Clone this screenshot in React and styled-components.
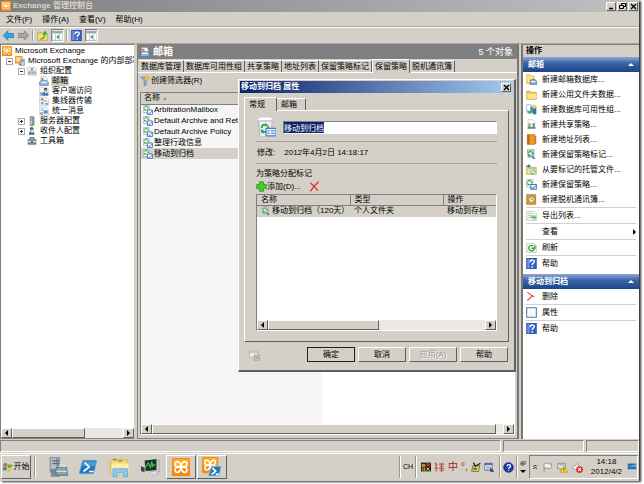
import React, { useEffect, useRef } from 'react'
import styled, { createGlobalStyle, css } from 'styled-components'

const Svg = ({ size = 11, children }) => (
  <svg width={size} height={size} viewBox="0 0 16 16" aria-hidden="true" style={{ flex: 'none', display: 'block' }}>
    {children}
  </svg>
)

const Knot = ({ s = 16 }) => (
  <g transform={`scale(${s / 16})`}>
    <rect width="16" height="16" rx="1" fill="#f58a0b" />
    <rect x="1" y="1" width="14" height="7" fill="#ffae2b" />
    <path d="M8 8C4 9 2 7 3 4C5 2 8 4 8 8C8 4 11 2 13 4C14 7 12 9 8 8C12 7 14 9 13 12C11 14 8 12 8 8C8 12 5 14 3 12C2 9 4 7 8 8Z" fill="none" stroke="#fff" strokeWidth="1.500" />
  </g>
)

const Recycle = ({ x = 0, y = 0, s = 1 }) => (
  <g transform={`translate(${x} ${y}) scale(${s})`} fill="none" stroke="#299b35" strokeWidth="2.200">
    <path d="M2 6L4 2h4M10 3l2 4-3 1M8 11H3L2 8" />
    <path d="M7 0l3 2-3 2M5 9l-3 2 3 2" strokeWidth="1.200" />
  </g>
)

const Person = ({ x = 0, y = 0 }) => (
  <g transform={`translate(${x} ${y})`}>
    <path d="M0 12c0-8 9-8 9 0z" fill="#2c69ad" />
    <path d="M3 6l2 4 2-4z" fill="#fff" />
    <circle cx="4.500" cy="3.500" r="3" fill="#d59b68" />
    <path d="M1.500 3C2-1 7-1 7.500 3L5 2z" fill="#3c3028" />
  </g>
)

const Page = ({ children }) => (
  <>
    <path d="M1 2h11l3 3v10H1z" fill="#f7f8f9" stroke="#b4b9bd" />
    {children}
  </>
)

const FolderShape = () => (
  <>
    <path d="M1 3h5l2 2h7v10H1z" fill="#f4c74f" stroke="#c89d35" />
    <path d="M2 7h13v7H2z" fill="#ffe68b" />
  </>
)

const shapes = {
  exchange: <Knot />,
  org: <><Knot s={12} /><path d="M9 5h6v10H9z" fill="#ced9e4" stroke="#6e8094" /><path d="M10 7h4M10 9h4" stroke="#3977b5" /><path d="M6 12h4v3H6z" fill="#57a744" /></>,
  orgcfg: <Page><path d="M8 4v4M4 11V8h8v3" fill="none" stroke="#777" /><path d="M6 3h4v3H6zM2 10h4v3H2zM7 10h3v3H7zM11 10h3v3h-3z" fill="#8c979f" /></Page>,
  mailbox: <><path d="M3 1h8l2 3v7H3z" fill="#fff" stroke="#a7b0ba" /><path d="M4 3h3v3H4z" fill="#cf4d3a" /><path d="M1 9l3-2h8l3 3v5H1z" fill="#91b8dc" stroke="#466f9c" /><path d="M4 9h8l1 2H4z" fill="#eff6fc" /></>,
  client: <Page><path d="M2 10h7v5H2z" fill="#74a5d4" /><Person x={6} y={3} /></Page>,
  hub: <Page><path d="M3 4h4v3H3z" fill="#d75844" /><path d="M6 8h6M9 6l3 2-3 3" fill="none" stroke="#8e99a5" /><path d="M3 10h4v3H3zM10 11h4v3h-4z" fill="#699bc8" /></Page>,
  um: <Page><path d="M3 5h5M3 7h5" stroke="#939da5" /><path d="M8 7h6v5H8z" fill="#4e8dce" /><path d="M2 10h5v4H2z" fill="#97a6b4" /></Page>,
  server: <><path d="M5 0l7 1v14l-7 1z" fill="#8797a6" /><path d="M5 0l4 1v14l-4 1z" fill="#d1dbe2" stroke="#667888" /><path d="M6 3h2M6 5h2M6 7h2" stroke="#496478" /><circle cx="9" cy="13" r="2" fill="#50b83f" /></>,
  person: <Person x={3} y={2} />,
  toolbox: <><path d="M5 5V3h6v2" fill="none" stroke="#53616c" strokeWidth="2" /><path d="M1 5h14v9H1z" fill="#778d9b" /><path d="M1 9h14" stroke="#d7e2e6" strokeWidth="2" /><path d="M7 8h2v3H7z" fill="#40515c" /></>,
  back: <path d="M0 8l7-7v4h9v6H7v4z" fill="#30a3e2" stroke="#187bb5" />,
  next: <path d="M16 8L9 1v4H0v6h9v4z" fill="#a5a7a6" stroke="#777" />,
  up: <><path d="M1 4h5l2 2h7v9H1z" fill="#f7db6b" stroke="#bda047" /><path d="M5 12c4 0 5-3 5-6H7l5-5 3 5h-3c0 5-3 8-7 8z" fill="#40ad3b" /></>,
  pane: <><path d="M0 2h16v13H0z" fill="#fff" stroke="#8a979f" /><path d="M1 2h14v3H1z" fill="#8fa8b9" /><path d="M5 5v10M11 5v10" stroke="#aab6bf" /><path d="M6 10l4-3v6z" fill="#35a644" /></>,
  help: <><path d="M1 0h14v16H1z" fill="#3565ce" stroke="#153791" /><path d="M2 1h3v14H2z" fill="#7296e2" /><path d="M6 6c0-4 6-4 6-1 0 3-3 2-3 5M9 12v2" fill="none" stroke="#fff" strokeWidth="2" /></>,
  filter: <><path d="M1 3h12L9 8v6l-3 2V8z" fill="#93b8d4" stroke="#577d9a" /><path d="M11 0l1 3 4 1-3 2v4l-2-3-4 1 2-3-1-3z" fill="#ffba2d" /></>,
  policy: <><path d="M1 1h9v11H1z" fill="#fff" stroke="#90a0ad" /><Recycle x={1} y={1} s={0.65} /><path d="M7 8h8v7H7z" fill="#fff" stroke="#3f73ba" strokeWidth="1.500" /><path d="M8 12l2 2 4-4" fill="none" stroke="#437bc5" strokeWidth="1.500" /></>,
  tag: <><path d="M2 1h10l-1 11H3z" fill="#dfeaf2" stroke="#768da1" /><Recycle x={2} y={2} s={0.7} /><path d="M9 9l5 5-3 1-3-4z" fill="#577daf" /></>,
  bin: <><path d="M2 3h11l-1 13H3z" fill="#eef1f5" stroke="#b4bbc2" /><path d="M1 2l2-2h9l2 3H1z" fill="#fff" stroke="#b7bdc2" strokeWidth=".6" /><Recycle x={3} y={5} s={0.62} /><path d="M8 9h8v6H8z" fill="#eaf3ff" stroke="#4b80c9" /><path d="M9 11h2M12 11h3M9 13h2M12 13h3" stroke="#5e92da" /></>,
  plus: <path d="M5 1h6v4h4v6h-4v4H5v-4H1V5h4z" fill="#48c737" stroke="#22921e" />,
  cross: <path d="M2 3c4 3 7 6 11 11M14 1C9 5 6 9 2 15" stroke="#e33220" strokeWidth="2" fill="none" />,
  smallcross: <path d="M2 2l10 7M10 6l-8 8" stroke="#e33220" strokeWidth="1.500" fill="none" />,
  folderdb: <><path d="M1 1h5l2 2h4v11H1z" fill="#ffe28a" stroke="#d4a843" /><path d="M6 10l2-2h5l3 3v4H6z" fill="#82acd6" stroke="#41698f" /><path d="M8 10h5l1 2H7z" fill="#fff" /></>,
  folder: <FolderShape />,
  dag: <><path d="M1 1h7v10H1z" fill="#fff" stroke="#8ba5bb" /><path d="M6 4h5v9H6z" fill="#4b93c8" /><path d="M10 3h5v12h-5z" fill="#2977a6" /><path d="M2 9l5 2v4l-5-2z" fill="#55ad38" /><circle cx="12" cy="4" r="3" fill="#f6cb50" /></>,
  share: <><path d="M3 1h7l3 3v8H3z" fill="#fff" stroke="#c4c4c4" /><circle cx="5" cy="8" r="2" fill="#7eaf58" /><circle cx="11" cy="8" r="2" fill="#5d8cad" /><path d="M2 14c0-5 6-5 6 0zM8 14c0-5 6-5 6 0z" fill="#66886c" /></>,
  book: <><path d="M2 1h11v14H2z" fill="#ed9b22" stroke="#b56c16" /><path d="M2 1h3v14H2z" fill="#b8611e" /><path d="M14 3v3M14 7v3M14 11v3" stroke="#d55" strokeWidth="2" /></>,
  managed: <><FolderShape /><path d="M6 7h8v8H6z" fill="#fff" stroke="#8ba" /><Recycle x={7} y={8} s={0.5} /><path d="M0 3h5M3 1l3 2-3 2" fill="none" stroke="#3277bd" strokeWidth="1.500" /></>,
  oab: <><path d="M1 1h13v14H1z" fill="#e49b2b" stroke="#a8671a" /><circle cx="8" cy="8" r="4" fill="#fff1c5" stroke="#6b7780" /><path d="M8 6v2h2" fill="none" stroke="#356fa9" /></>,
  export: <Page><path d="M3 5h7M3 8h6M3 11h4" stroke="#a9acab" /><path d="M7 9h4V6l5 5-5 4v-3H7z" fill="#72c34e" /></Page>,
  refresh: <Page><path d="M11 6a4 4 0 1 0 1 4M8 9h5V5" fill="none" stroke="#31a83b" strokeWidth="2" /></Page>,
  props: <><path d="M1 1h14v14H1z" fill="#f8fcff" stroke="#4a78aa" strokeWidth="1.500" /><path d="M4 10l2 2 5-6" stroke="#dcebf6" fill="none" /></>,
  log: <><path d="M2 3h12v8H2z" fill="#eceeef" stroke="#aaa" /><path d="M2 5h12" stroke="#aaa" /><path d="M8 8h7v7H8z" fill="#c6cacd" stroke="#999" /><path d="M10 10l3 3M13 10l-3 3" stroke="#888" /></>,
  flagwin: <><path d="M1 3c2-2 4-2 6 0L6 8c-2-2-4-2-6 0z" fill="#e25b2d" /><path d="M8 3c2 2 4 2 7 0l-1 5c-3 2-5 2-7 0z" fill="#66ad38" /><path d="M0 9c2-2 4-2 6 0l-1 5c-2-1-3-1-5 0z" fill="#3b7ed1" /><path d="M7 9c2 2 4 2 7 0l-2 5c-3 2-4 2-6 0z" fill="#f5bd2e" /></>,
  srvmgr: <><path d="M2 0h8v12H2z" fill="#8c989f" /><path d="M3 1h4v10H3z" fill="#b8c3c9" /><path d="M4 3h5M4 5h5" stroke="#526773" /><path d="M3 9h7v6H3z" fill="#758b99" /><path d="M7 8h8l1 6H7z" fill="#8ba1ae" stroke="#586e7a" strokeWidth=".6" /><path d="M10 8V6h3v2M7 11h8" fill="none" stroke="#d4dfe4" /></>,
  shell: <><path d="M4 2h11q1 0 .7 1l-2.500 10q-.2 1-1 1H1q-1 0-.8-1L3 3q.2-1 1-1z" fill="#2377b9" stroke="#68add8" strokeWidth=".6" /><path d="M4 3h11l-1 4H3z" fill="#4c9dd3" /><path d="M5 4l4 4-5 4M9 12h4" fill="none" stroke="#fff" strokeWidth="1.500" /></>,
  explorer: <><path d="M1 3l3-2 2 1h8l1 11H1z" fill="#f4d878" stroke="#d2b251" strokeWidth=".6" /><path d="M2 5h13v8H2z" fill="#ffedaa" /><path d="M3 2h3" stroke="#47a23e" /><path d="M7 3h3" stroke="#d95b44" /><path d="M3 15V9h11v6h-3v-3H6v3z" fill="#8bcbee" stroke="#54a6d6" strokeWidth=".6" /></>,
  monitor: <><path d="M4 3l9-2 3 1v9l-3 1-9-2z" fill="#c3c9c6" stroke="#8b9696" strokeWidth=".5" /><path d="M3 2l10-1v9L4 11z" fill="#1d2f24" /><path d="M4 8l2-4 2 4 1-5 1 4 2-2" fill="none" stroke="#34d252" /><path d="M0 7l3 1v4l-3-1z" fill="#3d4742" /><path d="M7 12l5-1 3 2-6 2z" fill="#dce0de" stroke="#9aa39f" strokeWidth=".4" /></>,
  exshell: <><Knot s={13} /><g transform="translate(5 6) scale(.66)"><path d="M4 2h12l-3 12H0z" fill="#2377b9" stroke="#a9d2ec" /><path d="M5 4l4 4-5 4M9 12h4" fill="none" stroke="#fff" strokeWidth="2" /></g></>,
  ime: <><path d="M0 1h16v14H0z" fill="#202117" /><path d="M1 3h6v5H1z" fill="#b84" /><path d="M9 2h5v5H9z" fill="#c33" /><path d="M3 9v5M6 9v5M9 9l5 5M13 9l-4 5" stroke="#ded15b" strokeWidth="1.500" /></>,
  chop: <path d="M1 2l4 3M3 1v13M1 9h5M7 3h8M8 6h6M7 9h8M11 1v14M8 12h7" stroke="#b54440" strokeWidth="1.400" fill="none" />,
  pad: <><path d="M3 6h11l-2 9H1z" fill="#e4d65c" stroke="#444419" /><path d="M4 1l3 6 8-5M4 11h5" stroke="#222" strokeWidth="2" fill="none" /></>,
  options: <><path d="M1 2h11v10H1z" fill="#eef" stroke="#456" /><path d="M1 3h11" stroke="#426dba" strokeWidth="3" /><path d="M9 7l6 7H9z" fill="#223b80" /><path d="M3 7h6M3 10h5" stroke="#667" /></>,
  helpball: <><circle cx="8" cy="8" r="7" fill="#183aab" stroke="#071c62" /><path d="M6 6c0-3 5-3 5 0 0 2-3 2-3 4M8 12v1" fill="none" stroke="#fff" strokeWidth="2" /></>,
  restore: <><path d="M5 1h9v7H5zM2 5h8v6H2z" fill="#ddd" stroke="#222" strokeWidth="1.500" /></>,
  chevrons: <path d="M3 7l5-4 5 4M3 13l5-4 5 4" stroke="#111" strokeWidth="2" fill="none" />,
  flag: <path d="M3 15V2c5-2 6 3 11 0l-1 7c-4 2-6-2-10 0" fill="#f5f5f2" stroke="#8d8e8b" strokeWidth="1.300" />,
  net: <><path d="M1 2h11v8H1z" fill="#e0e0d8" stroke="#777" /><path d="M5 12h5M3 4h7" stroke="#888" /><path d="M10 6l6 9H4z" fill="#ffd12d" stroke="#a98112" strokeWidth=".7" /><path d="M10 9v3M10 13v1" stroke="#222" /></>,
  sound: <><path d="M1 6h3l5-4v12l-5-4H1z" fill="#fff" stroke="#888" /><circle cx="11" cy="11" r="5" fill="#dd342c" /><path d="M9 9l4 4M13 9l-4 4" stroke="#fff" strokeWidth="1.500" /></>,
  desktop: <><path d="M1 2h14v10H1z" fill="#2b6caf" stroke="#a9c6df" /><path d="M2 8l12-5v5z" fill="#68a4d4" /></>,
}

const Icon = ({ name, size }) => <Svg size={size}>{shapes[name]}</Svg>

const treeItems = [
  { level: 0, icon: 'exchange', text: 'Microsoft Exchange' },
  { level: 1, box: '-', icon: 'org', text: 'Microsoft Exchange 的内部部署' },
  { level: 2, box: '-', icon: 'orgcfg', text: '组织配置' },
  { level: 3, icon: 'mailbox', text: '邮箱', selected: true },
  { level: 3, icon: 'client', text: '客户端访问' },
  { level: 3, icon: 'hub', text: '集线器传输' },
  { level: 3, icon: 'um', text: '统一消息' },
  { level: 2, box: '+', icon: 'server', text: '服务器配置' },
  { level: 2, box: '+', icon: 'person', text: '收件人配置' },
  { level: 2, icon: 'toolbox', text: '工具箱' },
]

const tabs = ['数据库管理', '数据库可用性组', '共享策略', '地址列表', '保留策略标记', '保留策略', '脱机通讯簿']

const policies = ['ArbitrationMailbox', 'Default Archive and Retention Policy', 'Default Archive Policy', '整理行政信息', '移动到归档']

const mailActions = [
  { icon: 'folderdb', text: '新建邮箱数据库...' },
  { icon: 'folder', text: '新建公用文件夹数据...' },
  { icon: 'dag', text: '新建数据库可用性组...' },
  { icon: 'share', text: '新建共享策略...' },
  { icon: 'book', text: '新建地址列表...' },
  { icon: 'tag', text: '新建保留策略标记...' },
  { icon: 'managed', text: '从要标记的托管文件...' },
  { icon: 'policy', text: '新建保留策略...' },
  { icon: 'oab', text: '新建脱机通讯簿...', line: true },
  { icon: 'export', text: '导出列表...', line: true },
  { text: '查看', more: true, line: true },
  { icon: 'refresh', text: '刷新', line: true },
  { icon: 'help', text: '帮助' },
]

const itemActions = [
  { icon: 'smallcross', text: '删除', line: true },
  { icon: 'props', text: '属性', line: true },
  { icon: 'help', text: '帮助' },
]

const HScroll = ({ thumb }) => (
  <ScrollBar>
    <ScrollButton aria-label="向左滚动"><Arrow $dir="left" /></ScrollButton>
    <ScrollTrack><ScrollThumb $width={thumb} /></ScrollTrack>
    <ScrollButton aria-label="向右滚动"><Arrow $dir="right" /></ScrollButton>
  </ScrollBar>
)

const ActionGroup = ({ title, items }) => (
  <section>
    <GroupTitle>{title}<Arrow $dir="up" /></GroupTitle>
    <ActionList>
      {items.map((item) => (
        <ActionItem key={item.text} $line={item.line}>
          <ActionButton>
            <IconSlot>{item.icon && <Icon name={item.icon} />}</IconSlot>
            <span>{item.text}</span>
            {item.more && <MoreMark><Arrow $dir="right" /></MoreMark>}
          </ActionButton>
        </ActionItem>
      ))}
    </ActionList>
  </section>
)

const PropertyDialog = () => {
  const nameRef = useRef(null)

  useEffect(() => {
    nameRef.current.focus()
    nameRef.current.select()
  }, [])

  return (
    <Dialog role="dialog" aria-labelledby="dialog-title">
      <DialogTitle>
        <span id="dialog-title">移动到归档 属性</span>
        <WinButton aria-label="关闭"><WinGlyph name="close" /></WinButton>
      </DialogTitle>
      <DialogTabs role="tablist">
        <DialogTab role="tab" aria-selected="true" $active>常规</DialogTab>
        <DialogTab role="tab" aria-selected="false">邮箱</DialogTab>
      </DialogTabs>
      <DialogPanel>
        <NameRow>
          <Icon name="bin" size={20} />
          <NameInput ref={nameRef} aria-label="名称" defaultValue="移动到归档" />
        </NameRow>
        <ModifiedRow>
          <span>修改:</span>
          <span>2012年4月2日 14:18:17</span>
        </ModifiedRow>
        <TagLabel>为策略分配标记</TagLabel>
        <TagTools>
          <PlainButton><Icon name="plus" />添加(D)...</PlainButton>
          <PlainButton aria-label="删除标记"><Icon name="cross" /></PlainButton>
        </TagTools>
        <TagBox>
          <TagTable>
            <thead>
              <tr><th>名称</th><th>类型</th><th>操作</th></tr>
            </thead>
            <tbody>
              <tr>
                <td><CellFlex><Icon name="tag" size={10} />移动到归档（120天）</CellFlex></td>
                <td>个人文件夹</td>
                <td>移动到存档</td>
              </tr>
            </tbody>
          </TagTable>
          <HScroll thumb={51} />
        </TagBox>
      </DialogPanel>
      <DialogButtons>
        <PlainButton aria-label="查看命令"><Icon name="log" size={12} /></PlainButton>
        <ButtonRow>
          <PushButton $primary>确定</PushButton>
          <PushButton>取消</PushButton>
          <PushButton disabled>应用(A)</PushButton>
          <PushButton>帮助</PushButton>
        </ButtonRow>
      </DialogButtons>
    </Dialog>
  )
}

const WinGlyph = ({ name }) => (
  <svg width="7" height="7" viewBox="0 0 7 7" fill="none" stroke="#000" aria-hidden="true">
    {name === 'min' && <path d="M1 5.500h4" strokeWidth="1.500" />}
    {name === 'max' && <path d="M2.500 2V.5h4v3H5M.5 2.500h4v3h-4z" />}
    {name === 'close' && <path d="M1 1l5 5M6 1L1 6" strokeWidth="1.300" />}
  </svg>
)

const App = () => {
  return (
    <Screen>
      <GlobalStyle />
      <TitleBar>
        <Icon name="exchange" size={10} />
        <h1>Exchange 管理控制台</h1>
        <WinButtons>
          <WinButton aria-label="最小化"><WinGlyph name="min" /></WinButton>
          <WinButton aria-label="还原"><WinGlyph name="max" /></WinButton>
          <WinButton aria-label="关闭窗口"><WinGlyph name="close" /></WinButton>
        </WinButtons>
      </TitleBar>
      <MenuBar>
        {['文件(F)', '操作(A)', '查看(V)', '帮助(H)'].map((m) => <PlainButton key={m}>{m}</PlainButton>)}
      </MenuBar>
      <ToolBar>
        <ToolButton aria-label="后退"><Icon name="back" /></ToolButton>
        <ToolButton aria-label="前进"><Icon name="next" /></ToolButton>
        <Divider />
        <ToolButton aria-label="上一级"><Icon name="up" /></ToolButton>
        <ToolButton aria-label="显示树" $on><Icon name="pane" /></ToolButton>
        <Divider />
        <ToolButton aria-label="帮助"><Icon name="help" /></ToolButton>
        <ToolButton aria-label="显示操作窗格" $on><Icon name="pane" /></ToolButton>
      </ToolBar>

      <Workspace>
        <TreePane>
          <TreeList>
            {treeItems.map((item) => (
              <TreeRow key={item.text} $level={item.level}>
                {item.level > 0 && <Expander $box={item.box}>{item.box && <ExpandGlyph sign={item.box} />}</Expander>}
                <Icon name={item.icon} size={10} />
                <TreeText $selected={item.selected}>{item.text}</TreeText>
              </TreeRow>
            ))}
          </TreeList>
          <HScroll thumb={66} />
        </TreePane>

        <MainPane>
          <MainHeader>
            <Icon name="mailbox" size={10} />
            <h2>邮箱</h2>
            <Count>5 个对象</Count>
          </MainHeader>
          <TabRow role="tablist">
            {tabs.map((t) => <Tab key={t} role="tab" aria-selected={t === '保留策略'} $active={t === '保留策略'}>{t}</Tab>)}
          </TabRow>
          <TabBody>
            <FilterRow>
              <PlainButton><Icon name="filter" />创建筛选器(R)</PlainButton>
            </FilterRow>
            <PolicyBox>
              <PolicyTable>
                <thead><tr><th>名称 <SortMark>▲</SortMark></th></tr></thead>
                <tbody>
                  {policies.map((p) => (
                    <PolicyRow key={p} $selected={p === '移动到归档'}>
                      <td><CellFlex><Icon name="policy" size={10} />{p}</CellFlex></td>
                    </PolicyRow>
                  ))}
                </tbody>
              </PolicyTable>
              <HScroll thumb={98} />
            </PolicyBox>
          </TabBody>
        </MainPane>

        <ActionPane>
          <PaneTitle>操作</PaneTitle>
          <ActionGroup title="邮箱" items={mailActions} />
          <ActionGroup title="移动到归档" items={itemActions} />
        </ActionPane>
      </Workspace>

      <StatusBar>
        <StatusCell />
        <StatusCell />
        <StatusCell />
      </StatusBar>

      <TaskBar>
        <StartButton><Icon name="flagwin" size={10} />开始</StartButton>
        <Divider />
        <Launchers>
          <TaskButton aria-label="服务器管理器"><Icon name="srvmgr" size={21} /></TaskButton>
          <TaskButton aria-label="PowerShell"><Icon name="shell" size={18} /></TaskButton>
          <TaskButton aria-label="资源管理器"><Icon name="explorer" size={21} /></TaskButton>
          <TaskButton aria-label="系统监视器"><Icon name="monitor" size={19} /></TaskButton>
          <TaskButton aria-label="Exchange" $raised><Icon name="exchange" size={18} /></TaskButton>
          <TaskButton aria-label="Exchange Shell" $raised><Icon name="exshell" size={20} /></TaskButton>
        </Launchers>
        <Language>
          <Divider />
          <CodeText>CH</CodeText>
          <Divider />
          <ImeIcons>
            <Icon name="ime" size={10} />
            <Icon name="chop" size={11} />
            <ImeText>中</ImeText>
            <ImeText>°,</ImeText>
            <Icon name="pad" size={10} />
            <Icon name="options" size={11} />
          </ImeIcons>
          <Divider />
          <Icon name="helpball" size={11} />
          <Divider />
          <Stack><Icon name="restore" size={6} /><Arrow $dir="down" /></Stack>
        </Language>
        <Tray>
          <Icon name="chevrons" size={6} />
          <Icon name="flag" size={11} />
          <Icon name="net" size={11} />
          <Icon name="sound" size={11} />
          <Clock><span>14:18</span><span>2012/4/2</span></Clock>
          <Icon name="desktop" size={10} />
        </Tray>
      </TaskBar>
      <PropertyDialog />
    </Screen>
  )
}

const ExpandGlyph = ({ sign }) => (
  <svg width="5" height="5" viewBox="0 0 5 5" stroke="#333" aria-hidden="true" style={{ flex: 'none' }}>
    <path d={sign === '+' ? 'M1 2.500h3M2.500 1v3' : 'M1 2.500h3'} />
  </svg>
)

const GlobalStyle = createGlobalStyle`
  * {
    box-sizing: border-box;
  }
  body {
    margin: 0;
    padding: 0 5px 3px 0;
    background: #fff;
    overflow: hidden;
    font-family: "Liberation Sans", "Noto Sans CJK SC", sans-serif;
    font-size: 8px;
    line-height: 10px;
    color: #000;
  }
  button, input {
    font: inherit;
    color: inherit;
  }
  h1, h2, h3, ul {
    margin: 0;
    padding: 0;
    font-size: 8px;
  }
  table {
    border-collapse: collapse;
    border-spacing: 0;
  }
`

const raised = css`
  border: 1px solid;
  border-color: #fff #606060 #606060 #fff;
  background: #d4d0c8;
`

const sunken = css`
  border: 1px solid;
  border-color: #808080 #fff #fff #808080;
`

const Screen = styled.div`
  position: relative;
  display: flex;
  flex-direction: column;
  min-height: calc(100vh - 3px);
  background: #d4d0c8;
  box-shadow: 2px 1px 2px #333;
  white-space: nowrap;
`

const TitleBar = styled.header`
  display: flex;
  align-items: center;
  gap: 2px;
  height: 12px;
  padding: 0 1px;
  background: linear-gradient(to right, #7f7f7f, #c0c0c0);
  h1 {
    color: #d8d4cc;
    font-weight: bold;
  }
`

const WinButtons = styled.div`
  display: flex;
  gap: 1px;
  margin-left: auto;
`

const WinButton = styled.button`
  ${raised}
  display: flex;
  align-items: center;
  justify-content: center;
  width: 10px;
  height: 9px;
  padding: 0;
`

const PlainButton = styled.button`
  display: flex;
  align-items: center;
  padding: 0;
  border: none;
  background: none;
`

const MenuBar = styled.nav`
  display: flex;
  align-items: center;
  gap: 10px;
  height: 15px;
  padding: 2px 6px 0;
  border-bottom: 1px solid #aaa69e;
`

const ToolBar = styled.div`
  display: flex;
  align-items: center;
  gap: 2px;
  height: 17px;
  padding: 0 2px;
  border-top: 1px solid #fff;
  border-bottom: 1px solid #aaa69e;
`

const ToolButton = styled.button`
  display: flex;
  align-items: center;
  justify-content: center;
  width: 13px;
  height: 13px;
  padding: 0;
  border: 1px solid transparent;
  background: none;
  ${(p) => p.$on && css`
    border-color: #808080 #fff #fff #808080;
    background: #e9e7e2;
  `}
`

const Divider = styled.span`
  align-self: stretch;
  width: 2px;
  margin: 2px 0;
  border-left: 1px solid #9c9890;
  border-right: 1px solid #fff;
`

const Workspace = styled.main`
  display: grid;
  grid-template-columns: 135px minmax(0, 1fr) 118px;
  gap: 2px;
  flex: 1;
`

const TreePane = styled.aside`
  display: flex;
  flex-direction: column;
  overflow: hidden;
  background: #fff;
  border: 1px solid #808080;
  border-right-color: #d4d0c8;
`

const TreeList = styled.ul`
  flex: 1;
  padding: 1px 0 0 1px;
  list-style: none;
  overflow: hidden;
`

const indents = [0, 4, 16, 28]

const TreeRow = styled.li`
  display: flex;
  align-items: center;
  gap: 2px;
  height: 10px;
  padding-left: ${(p) => indents[p.$level]}px;
`

const Expander = styled.span`
  display: flex;
  align-items: center;
  justify-content: center;
  flex: none;
  width: 7px;
  height: 7px;
  border: 1px solid ${(p) => (p.$box ? '#aaa' : 'transparent')};
`

const TreeText = styled.span`
  padding: 0 1px;
  background: ${(p) => (p.$selected ? '#d4d0c8' : 'none')};
`

const Arrow = styled.i`
  display: block;
  width: 0;
  height: 0;
  border: 3px solid transparent;
  ${(p) => p.$dir === 'left' && 'border-left: 0; border-right-color: #000;'}
  ${(p) => p.$dir === 'right' && 'border-right: 0; border-left-color: #000;'}
  ${(p) => p.$dir === 'up' && 'border-top: 0; border-bottom-color: #fff;'}
  ${(p) => p.$dir === 'down' && 'border-bottom: 0; border-top-color: #000;'}
`

const ScrollBar = styled.div`
  display: flex;
  height: 10px;
  background: #e9e8e4;
`

const ScrollButton = styled.button`
  ${raised}
  display: flex;
  align-items: center;
  justify-content: center;
  width: 11px;
  padding: 0;
`

const ScrollTrack = styled.div`
  flex: 1;
`

const ScrollThumb = styled.div`
  ${raised}
  width: ${(p) => p.$width}%;
  height: 10px;
`

const MainPane = styled.section`
  display: flex;
  flex-direction: column;
  min-width: 0;
  border: 1px solid #808080;
  border-right: 2px solid #777;
`

const MainHeader = styled.div`
  display: flex;
  align-items: center;
  gap: 3px;
  height: 14px;
  padding: 0 4px 0 2px;
  background: #7f7f7f;
  color: #fff;
  h2 {
    font-size: 10px;
  }
`

const Count = styled.span`
  margin-left: auto;
  font-size: 9px;
`

const TabRow = styled.div`
  display: flex;
  align-items: flex-end;
  height: 14px;
  padding: 0 1px;
  border-bottom: 1px solid #fff;
`

const Tab = styled.button`
  height: ${(p) => (p.$active ? 14 : 12)}px;
  margin-bottom: ${(p) => (p.$active ? -1 : 0)}px;
  padding: 0 2px;
  border: none;
  border-right: 1px solid #606060;
  border-top: 1px solid #fff;
  border-left: ${(p) => (p.$active ? '1px solid #fff' : 'none')};
  background: #d4d0c8;
`

const TabBody = styled.div`
  display: flex;
  flex-direction: column;
  flex: 1;
  padding: 0 2px 3px;
`

const FilterRow = styled.div`
  display: flex;
  align-items: center;
  height: 19px;
  padding-bottom: 4px;
`

const PolicyBox = styled.div`
  ${sunken}
  display: flex;
  flex-direction: column;
  justify-content: space-between;
  flex: 1;
  background: linear-gradient(to right, #f6f6f6 181px, #fff 181px);
`

const PolicyTable = styled.table`
  width: 100%;
  th {
    height: 11px;
    padding: 0 3px;
    background: #d4d0c8;
    border-bottom: 1px solid #808080;
    font-weight: normal;
    text-align: left;
  }
  td {
    height: 11px;
    padding: 0 2px;
  }
`

const PolicyRow = styled.tr`
  background: ${(p) => (p.$selected ? '#d4d0c8' : 'none')};
`

const SortMark = styled.small`
  color: #888;
  font-size: 5px;
`

const CellFlex = styled.span`
  display: flex;
  align-items: center;
  gap: 1px;
`

const ActionPane = styled.aside`
  background: #fff;
  border-left: 2px solid #777;
  border-top: 1px solid #808080;
`

const PaneTitle = styled.h2`
  height: 12px;
  padding: 1px 3px;
  background: #d4d0c8;
`

const GroupTitle = styled.h3`
  display: flex;
  align-items: center;
  justify-content: space-between;
  height: 15px;
  padding: 0 5px;
  background: linear-gradient(#8fa9d4, #3a65a8 40%, #1c4589);
  color: #fff;
`

const ActionList = styled.ul`
  padding: 0 3px 3px;
  list-style: none;
`

const ActionItem = styled.li`
  border-bottom: ${(p) => (p.$line ? '1px solid #d4d0c8' : 'none')};
`

const ActionButton = styled.button`
  display: flex;
  align-items: center;
  gap: 5px;
  width: 100%;
  height: 15px;
  padding: 0;
  border: none;
  background: none;
`

const IconSlot = styled.span`
  width: 11px;
`

const MoreMark = styled.span`
  margin-left: auto;
`

const StatusBar = styled.footer`
  display: grid;
  grid-template-columns: 1fr 81px 53px;
  gap: 2px;
  height: 14px;
  padding: 1px 0;
`

const StatusCell = styled.span`
  ${sunken}
`

const TaskBar = styled.footer`
  display: flex;
  align-items: center;
  gap: 3px;
  height: 28px;
  padding: 0 1px 1px;
  border-top: 1px solid #fff;
`

const StartButton = styled.button`
  ${raised}
  display: flex;
  align-items: center;
  justify-content: center;
  gap: 1px;
  width: 30px;
  height: 24px;
  padding: 0;
`

const Launchers = styled.div`
  display: flex;
  gap: 1px;
  padding-left: 3px;
`

const TaskButton = styled.button`
  display: flex;
  align-items: center;
  justify-content: center;
  width: 30px;
  height: 24px;
  padding: 0;
  border: none;
  background: none;
  ${(p) => p.$raised && raised}
`

const Language = styled.div`
  display: flex;
  align-items: center;
  align-self: stretch;
  gap: 2px;
  margin-left: auto;
`

const ImeIcons = styled.div`
  display: flex;
  align-items: center;
  gap: 3px;
  padding: 0 2px;
`

const CodeText = styled.span`
  font-size: 7px;
`

const ImeText = styled.span`
  color: #a31f1f;
  font-size: 10px;
`

const Stack = styled.span`
  display: flex;
  flex-direction: column;
  align-items: center;
  gap: 3px;
`

const Tray = styled.div`
  ${sunken}
  display: flex;
  align-items: center;
  gap: 4px;
  height: 24px;
  padding: 0 0 0 2px;
`

const Clock = styled.time`
  display: flex;
  flex-direction: column;
  align-items: center;
  padding: 0 1px 0 4px;
`

const Dialog = styled.section`
  ${raised}
  position: absolute;
  left: 238px;
  top: 79px;
  width: 278px;
  padding: 1px;
  border-right-width: 2px;
  border-bottom-width: 2px;
`

const DialogTitle = styled.header`
  display: flex;
  align-items: center;
  justify-content: space-between;
  height: 12px;
  padding: 0 2px 0 1px;
  background: linear-gradient(to right, #0a246a, #a6caf0);
  color: #fff;
  font-weight: bold;
`

const DialogTabs = styled.div`
  display: flex;
  align-items: flex-end;
  height: 17px;
  padding-left: 4px;
`

const DialogTab = styled.button`
  height: ${(p) => (p.$active ? 14 : 12)}px;
  width: ${(p) => (p.$active ? 33 : 29)}px;
  margin-bottom: ${(p) => (p.$active ? -1 : 0)}px;
  padding: 0 4px;
  border: none;
  border-right: 1px solid #606060;
  border-top: 1px solid #fff;
  border-left: ${(p) => (p.$active ? '1px solid #fff' : 'none')};
  background: #d4d0c8;
  text-align: left;
`

const DialogPanel = styled.div`
  ${raised}
  margin: 0 4px;
  padding: 6px 11px 10px;
`

const NameRow = styled.div`
  display: flex;
  align-items: center;
  gap: 7px;
  padding-bottom: 4px;
  border-bottom: 1px solid #a5a199;
`

const NameInput = styled.input`
  ${sunken}
  flex: 1;
  min-width: 0;
  height: 13px;
  padding: 0;
  background: #fff;
  outline: none;
  &::selection {
    background: #0a246a;
    color: #fff;
  }
`

const ModifiedRow = styled.div`
  display: flex;
  align-items: center;
  gap: 9px;
  height: 22px;
  padding-left: 1px;
  border-bottom: 1px solid #a5a199;
`

const TagLabel = styled.div`
  padding-top: 5px;
`

const TagTools = styled.div`
  display: flex;
  align-items: center;
  gap: 8px;
  height: 15px;
`

const TagBox = styled.div`
  ${sunken}
  display: flex;
  flex-direction: column;
  justify-content: space-between;
  min-height: 137px;
  background: #fff;
`

const TagTable = styled.table`
  width: 100%;
  table-layout: fixed;
  th {
    height: 10px;
    padding: 0 4px;
    border-right: 1px solid #808080;
    border-bottom: 1px solid #808080;
    font-weight: normal;
    text-align: left;
  }
  th:first-child, th:nth-child(2) {
    width: 93px;
  }
  th:last-child {
    border-right: none;
  }
  td {
    height: 11px;
    padding: 0 4px;
  }
  tr {
    background: #d4d0c8;
  }
`

const DialogButtons = styled.div`
  display: flex;
  align-items: center;
  justify-content: space-between;
  padding: 5px 5px 7px 8px;
`

const ButtonRow = styled.div`
  display: flex;
  gap: 3px;
`

const PushButton = styled.button`
  ${raised}
  width: 48px;
  height: 15px;
  padding: 0;
  outline: ${(p) => (p.$primary ? '1px solid #222' : 'none')};
  outline-offset: -1px;
  &:disabled {
    color: #999;
    text-shadow: 1px 1px 0 #fff;
  }
`

export default App
